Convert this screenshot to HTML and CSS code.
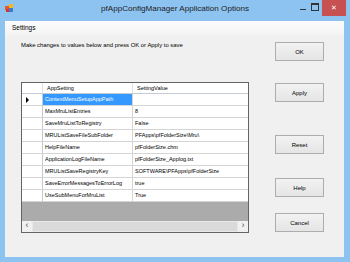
FILE: index.html
```html
<!DOCTYPE html>
<html lang="en">
<head>
    <meta charset="UTF-8">
    <title>pfAppConfigManager Application Options</title>
    <link rel="stylesheet" href="styles.css">
</head>
<body>
    <div class="window">
        <div class="titlebar">
            <svg class="app-icon" width="9" height="9" viewBox="0 0 9 9">
                <rect x="0" y="2" width="4" height="4" fill="#e8562a"/>
                <rect x="4" y="0" width="4" height="4" fill="#f5b820"/>
                <rect x="4" y="4" width="4" height="4" fill="#3a7bd5"/>
                <rect x="1" y="5" width="3" height="3" fill="#d9332b"/>
            </svg>
            <span class="title">pfAppConfigManager Application Options</span>
            <div class="caption-buttons">
                <span class="cap-min"></span>
                <span class="cap-max"></span>
                <span class="cap-close">&#x2715;</span>
            </div>
        </div>

        <div class="client">
            <div class="menubar">
                <span class="menu-item">Settings</span>
            </div>

            <div class="content">
                <div class="main">
                    <p class="hint">Make changes to values below and press OK or Apply to save</p>

                    <div class="grid">
                        <div class="grid-rows">
                            <div class="row header-row">
                                <div class="cell row-head"></div>
                                <div class="cell">AppSetting</div>
                                <div class="cell">SettingValue</div>
                            </div>
                            <div class="row">
                                <div class="cell row-head"><span class="current"></span></div>
                                <div class="cell selected">ContextMenuSetupAppPath</div>
                                <div class="cell"></div>
                            </div>
                            <div class="row">
                                <div class="cell row-head"></div>
                                <div class="cell">MaxMruListEntries</div>
                                <div class="cell">8</div>
                            </div>
                            <div class="row">
                                <div class="cell row-head"></div>
                                <div class="cell">SaveMruListToRegistry</div>
                                <div class="cell">False</div>
                            </div>
                            <div class="row">
                                <div class="cell row-head"></div>
                                <div class="cell">MRUListSaveFileSubFolder</div>
                                <div class="cell">PFApps\pfFolderSize\Mru\</div>
                            </div>
                            <div class="row">
                                <div class="cell row-head"></div>
                                <div class="cell">HelpFileName</div>
                                <div class="cell">pfFolderSize.chm</div>
                            </div>
                            <div class="row">
                                <div class="cell row-head"></div>
                                <div class="cell">ApplicationLogFileName</div>
                                <div class="cell">pfFolderSize_Applog.txt</div>
                            </div>
                            <div class="row">
                                <div class="cell row-head"></div>
                                <div class="cell">MRUListSaveRegistryKey</div>
                                <div class="cell">SOFTWARE\PFApps\pfFolderSize</div>
                            </div>
                            <div class="row">
                                <div class="cell row-head"></div>
                                <div class="cell">SaveErrorMessagesToErrorLog</div>
                                <div class="cell">true</div>
                            </div>
                            <div class="row">
                                <div class="cell row-head"></div>
                                <div class="cell">UseSubMenuForMruList</div>
                                <div class="cell">True</div>
                            </div>
                        </div>
                        <div class="hscroll">
                            <span class="arrow">&lsaquo;</span>
                            <span class="thumb"></span>
                            <span class="arrow">&rsaquo;</span>
                        </div>
                    </div>
                </div>

                <div class="buttons">
                    <button class="btn btn-ok">OK</button>
                    <button class="btn btn-apply">Apply</button>
                    <button class="btn btn-reset">Reset</button>
                    <button class="btn btn-help">Help</button>
                    <button class="btn btn-cancel">Cancel</button>
                </div>
            </div>
        </div>
    </div>
</body>
</html>
```

FILE: styles.css
```css
:root {
    --frame: #8dc3f1;
    --client: #f0f0f0;
    --grid-line: #d5d5d5;
    --header-line: #c3cbd5;
    --select: #3399ff;
}

* {
    box-sizing: border-box;
}

body {
    margin: 0;
    font-family: 'Liberation Sans', Arial, sans-serif;
    font-size: 5.9px;
    color: #000;
    overflow: hidden;
}

.window {
    width: 350px;
    height: 262px;
    background-color: var(--frame);
    padding: 0 6px 5px 5px;
    display: flex;
    flex-direction: column;
}

/* title bar */

.titlebar {
    height: 21px;
    display: grid;
    grid-template-columns: 1fr auto 1fr;
    align-items: start;
    margin: 0 -6px 0 -5px;
}

.app-icon {
    margin: 4px 0 0 5px;
}

.title {
    font-size: 8.1px;
    color: #222;
    line-height: 21px;
    margin-top: -2px;
}

.caption-buttons {
    display: flex;
    justify-content: flex-end;
    padding-right: 4px;
}

.cap-min,
.cap-max {
    width: 12px;
    height: 16px;
    display: flex;
    align-items: center;
    justify-content: center;
}

.cap-min::after {
    content: "";
    width: 6px;
    height: 1px;
    background: #333;
    margin-top: 2px;
}

.cap-max {
    margin-right: 1px;
}

.cap-max::after {
    content: "";
    width: 6px;
    height: 5px;
    border: 1px solid #333;
    border-top-width: 2px;
    margin-top: -2px;
}

.cap-close {
    width: 24px;
    height: 16px;
    background-color: #c75050;
    color: white;
    font-size: 7px;
    display: flex;
    align-items: center;
    justify-content: center;
}

/* client area */

.client {
    flex: 1;
    background-color: var(--client);
    display: flex;
    flex-direction: column;
}

.menubar {
    height: 15px;
    background: linear-gradient(#fcfcfc, #f3f3f3);
    display: flex;
    align-items: center;
    padding-left: 7px;
}

.menu-item {
    font-size: 6.5px;
    margin-top: -3px;
}

.content {
    display: flex;
    padding-left: 16px;
}

.main {
    width: 228px;
}

.hint {
    margin: 5px 0 0;
    line-height: 8px;
    height: 8px;
}

/* data grid */

.grid {
    margin-top: 33px;
    width: 228px;
    height: 151px;
    border: 1px solid #646464;
    background-color: #ababab;
    display: flex;
    flex-direction: column;
    justify-content: space-between;
    overflow: hidden;
    font-size: 5.5px;
}

.row {
    display: grid;
    grid-template-columns: 21px 90px 170px;
    height: 12px;
    background-color: white;
}

.header-row {
    height: 11px;
}

.cell {
    border-right: 1px solid var(--grid-line);
    border-bottom: 1px solid var(--grid-line);
    padding-left: 2px;
    line-height: 11px;
    white-space: nowrap;
    overflow: hidden;
}

.header-row .cell {
    border-bottom-color: var(--header-line);
    border-right-color: #e2e2e2;
    padding-left: 4px;
    line-height: 10px;
}

.row-head {
    border-right-color: var(--header-line);
    display: flex;
    align-items: center;
    padding-left: 4px;
}

.current {
    width: 0;
    height: 0;
    border-left: 3px solid black;
    border-top: 3px solid transparent;
    border-bottom: 3px solid transparent;
}

.selected {
    background-color: var(--select);
    color: white;
}

.hscroll {
    height: 11px;
    background-color: #e8e8e8;
    display: flex;
    align-items: stretch;
}

.arrow {
    width: 10px;
    background-color: #f0f0f0;
    color: #555;
    font-size: 9px;
    line-height: 9px;
    text-align: center;
}

.thumb {
    flex: 1;
    background-color: #dadada;
    margin: 1px 1px;
}

/* buttons */

.buttons {
    margin-left: 26px;
    display: flex;
    flex-direction: column;
}

.btn {
    width: 49px;
    height: 19px;
    font-family: 'Liberation Sans', Arial, sans-serif;
    font-size: 6px;
    color: #000;
    border: 1px solid #adadad;
    background: linear-gradient(#f2f2f2, #e5e5e5);
    padding: 0;
}

.btn-ok { margin-top: 6px; }
.btn-apply { margin-top: 22px; }
.btn-reset { margin-top: 33px; }
.btn-help { margin-top: 24px; }
.btn-cancel { margin-top: 16px; }
```
